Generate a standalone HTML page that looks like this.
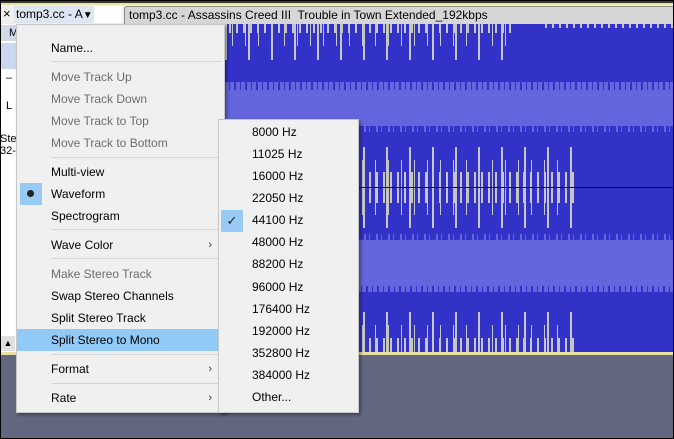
<!DOCTYPE html>
<html><head><style>
*{margin:0;padding:0;box-sizing:border-box}
body{width:674px;height:439px;overflow:hidden;background:#000;font-family:"Liberation Sans",sans-serif;position:relative}
.abs{position:absolute}
.menu{background:#f0f0f0;border:1px solid #c8c8c8;box-shadow:2px 2px 3px rgba(0,0,0,.35)}
.it{position:absolute;left:0;right:0;height:22px;line-height:22px;font-size:12px;color:#000;padding-left:34px}
.dis{color:#6d6d6d}
.sep{position:absolute;left:34px;right:2px;height:1px;background:#d6d6d6}
.arr{position:absolute;right:12px;top:0;font-size:11px;color:#333}
.sub .it{padding-left:33px}
.g1{background:repeating-linear-gradient(90deg,#c6c6c6 0 2px,transparent 2px 7px)}
.g2{background:repeating-linear-gradient(90deg,transparent 0 4px,#c6c6c6 4px 5px,transparent 5px 13px)}
.g3{background:repeating-linear-gradient(90deg,transparent 0 9px,#c6c6c6 9px 11px,transparent 11px 23px)}
.d1{background:repeating-linear-gradient(90deg,#3232c8 0 2px,transparent 2px 6px,#3232c8 6px 7px,transparent 7px 11px)}
.l1{background:repeating-linear-gradient(90deg,#6464dc 0 2px,transparent 2px 5px,#6464dc 5px 6px,transparent 6px 12px)}
</style></head><body>
<div class="abs" style="left:1px;top:1px;width:672px;height:437px;background:#63667f"></div>
<div class="abs" style="left:1px;top:1px;width:672px;height:4px;background:#3a3a2a"></div>
<div class="abs" style="left:1px;top:3px;width:672px;height:2px;background:#e8e4a8"></div>
<div class="abs" style="left:1px;top:5px;width:672px;height:19px;background:#f0f0f0"></div>
<div class="abs" style="left:3px;top:6px;font-size:13px">×</div>
<div class="abs" style="left:14px;top:6px;width:80px;height:17px;background:#dde6f2;font-size:12px;line-height:17px;padding-left:2px">tomp3.cc - A<span style="font-size:10px">▼</span></div>
<div class="abs" style="left:94px;top:6px;width:28px;height:17px;background:#fff"></div>
<div class="abs" style="left:124px;top:6px;width:549px;height:18px;background:#d6d6d6;border-left:1px solid #888;border-top:1px solid #888;border-radius:3px 0 0 0;font-size:12px;line-height:17px;padding-left:4px;color:#000">tomp3.cc - Assassins Creed III&nbsp; Trouble in Town Extended_192kbps</div>
<div class="abs" style="left:1px;top:24px;width:16px;height:329px;background:#fff"></div>
<div class="abs" style="left:1px;top:25px;width:16px;height:16px;background:#cfd9e8;font-size:11px;padding-left:8px;line-height:16px">M</div>
<div class="abs" style="left:1px;top:43px;width:16px;height:26px;background:#c9d8f0"></div>
<div class="abs" style="left:6px;top:72px;font-size:11px">–</div>
<div class="abs" style="left:6px;top:100px;font-size:11px">L</div>
<div class="abs" style="left:0px;top:133px;font-size:11px;line-height:12px">Ste<br>32-</div>
<div class="abs" style="left:1px;top:336px;width:14px;height:15px;background:#e0e0e0;font-size:9px;text-align:center;line-height:15px">▲</div>
<!-- waveform -->
<div class="abs" style="left:124px;top:24px;width:549px;height:329px;background:#3232c8"></div>
<!-- ch1 top -->
<div class="abs g1" style="left:124px;top:24px;width:390px;height:9px"></div>
<div class="abs g2" style="left:124px;top:24px;width:390px;height:22px"></div>
<div class="abs g3" style="left:124px;top:24px;width:390px;height:36px"></div>
<div class="abs g1" style="left:545px;top:24px;width:128px;height:4px"></div>
<!-- light band ch1 -->
<div class="abs" style="left:124px;top:82px;width:549px;height:44px;background:#6464dc"></div>
<div class="abs d1" style="left:124px;top:82px;width:549px;height:8px"></div>
<div class="abs l1" style="left:124px;top:126px;width:549px;height:6px"></div>
<!-- ch1 bottom -->
<div class="abs g3" style="left:124px;top:147px;width:450px;height:40px"></div>
<div class="abs g2" style="left:124px;top:160px;width:450px;height:27px"></div>
<div class="abs g1" style="left:124px;top:172px;width:450px;height:15px"></div>
<div class="abs" style="left:124px;top:187px;width:549px;height:1px;background:#111"></div>
<!-- ch2 top -->
<div class="abs g1" style="left:124px;top:188px;width:450px;height:15px"></div>
<div class="abs g2" style="left:124px;top:188px;width:450px;height:27px"></div>
<div class="abs g3" style="left:124px;top:188px;width:450px;height:40px"></div>
<!-- light band ch2 -->
<div class="abs l1" style="left:124px;top:234px;width:549px;height:6px"></div>
<div class="abs" style="left:124px;top:240px;width:549px;height:52px;background:#6464dc"></div>
<div class="abs d1" style="left:124px;top:286px;width:549px;height:6px"></div>
<!-- ch2 bottom -->
<div class="abs g3" style="left:124px;top:312px;width:450px;height:40px"></div>
<div class="abs g2" style="left:124px;top:325px;width:450px;height:27px"></div>
<div class="abs g1" style="left:124px;top:338px;width:450px;height:14px"></div>
<div class="abs" style="left:1px;top:352px;width:672px;height:3px;background:#e8e0a0"></div>
<!-- main menu -->
<div class="abs menu" style="left:16px;top:24px;width:209px;height:389px">
 <div class="it" style="top:12px">Name...</div>
 <div class="sep" style="top:36px"></div>
 <div class="it dis" style="top:41px">Move Track Up</div>
 <div class="it dis" style="top:63px">Move Track Down</div>
 <div class="it dis" style="top:85px">Move Track to Top</div>
 <div class="it dis" style="top:107px">Move Track to Bottom</div>
 <div class="sep" style="top:132px"></div>
 <div class="it" style="top:136px">Multi-view</div>
 <div class="abs" style="left:3px;top:158px;width:22px;height:22px;background:#99c9f5"></div>
 <div class="abs" style="left:10px;top:165px;width:7px;height:7px;border-radius:50%;background:#222"></div>
 <div class="it" style="top:158px">Waveform</div>
 <div class="it" style="top:180px">Spectrogram</div>
 <div class="sep" style="top:204px"></div>
 <div class="it" style="top:209px">Wave Color<span class="arr">›</span></div>
 <div class="sep" style="top:233px"></div>
 <div class="it dis" style="top:238px">Make Stereo Track</div>
 <div class="it" style="top:260px">Swap Stereo Channels</div>
 <div class="it" style="top:282px">Split Stereo Track</div>
 <div class="it" style="top:304px;background:#91c9f7;left:0;right:0">Split Stereo to Mono</div>
 <div class="sep" style="top:329px"></div>
 <div class="it" style="top:333px">Format<span class="arr">›</span></div>
 <div class="sep" style="top:358px"></div>
 <div class="it" style="top:362px">Rate<span class="arr">›</span></div>
</div>
<!-- submenu -->
<div class="abs menu sub" style="left:218px;top:119px;width:141px;height:294px">
 <div class="it" style="top:1px">8000 Hz</div>
 <div class="it" style="top:23px">11025 Hz</div>
 <div class="it" style="top:45px">16000 Hz</div>
 <div class="it" style="top:67px">22050 Hz</div>
 <div class="abs" style="left:2px;top:90px;width:22px;height:22px;background:#99c9f5;text-align:center;line-height:22px;font-size:13px;color:#222">✓</div>
 <div class="it" style="top:89px">44100 Hz</div>
 <div class="it" style="top:111px">48000 Hz</div>
 <div class="it" style="top:133px">88200 Hz</div>
 <div class="it" style="top:156px">96000 Hz</div>
 <div class="it" style="top:178px">176400 Hz</div>
 <div class="it" style="top:200px">192000 Hz</div>
 <div class="it" style="top:222px">352800 Hz</div>
 <div class="it" style="top:244px">384000 Hz</div>
 <div class="it" style="top:266px">Other...</div>
</div>
</body></html>
